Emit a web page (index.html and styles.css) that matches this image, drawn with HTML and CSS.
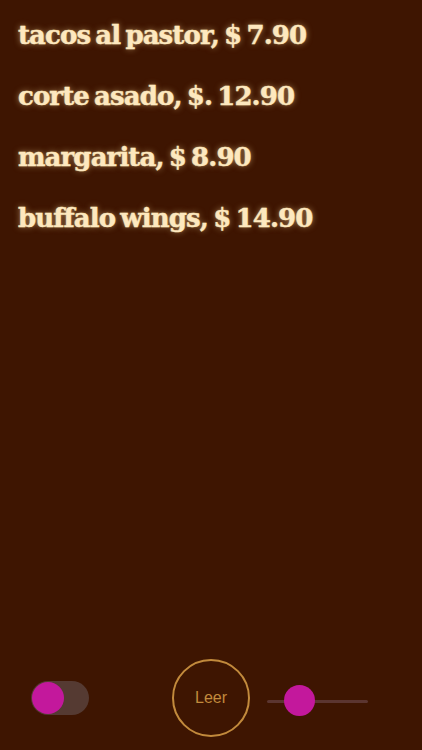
FILE: index.html
```html
<!DOCTYPE html>
<html>
<head>
<meta charset="utf-8">
<link rel="stylesheet" href="styles.css">
</head>
<body>
<div class="screen">
  <ul class="menu">
    <li>tacos al pastor, $ 7.90</li>
    <li>corte asado, $. 12.90</li>
    <li>margarita, $ 8.90</li>
    <li>buffalo wings, $ 14.90</li>
  </ul>
  <div class="controls">
    <div class="toggle"><span class="knob"></span></div>
    <button class="read">Leer</button>
    <div class="slider"><span class="track"></span><span class="thumb"></span></div>
  </div>
</div>
</body>
</html>
```
FILE: styles.css
```css
html, body { margin: 0; padding: 0; }
body { background: #3e1501; width: 422px; height: 750px; overflow: hidden; }
.screen { height: 750px; display: flex; flex-direction: column; justify-content: space-between; }
.menu { list-style: none; margin: 0; padding: 18px 0 0 18px; display: flex; flex-direction: column; gap: 27px; }
.menu li {
  font-family: "DejaVu Serif", serif; font-weight: bold; font-size: 26px; line-height: 34px;
  color: #fde8bf; letter-spacing: -0.9px; word-spacing: -3px;
  text-shadow: 0 0 6px rgba(255, 220, 160, 0.55), 0 0 2px rgba(255, 220, 160, 0.4);
  -webkit-text-stroke: 0.4px #fde8bf;
}
.controls { height: 100px; display: flex; align-items: center; padding: 0 0 4px 31px; box-sizing: border-box; }
.toggle { width: 58px; height: 34px; border-radius: 17px; background: #553a32; position: relative; }
.toggle .knob { position: absolute; left: 1px; top: 1px; width: 32px; height: 32px; border-radius: 50%; background: #c3189c; }
.read {
  margin-left: 83px; width: 78px; height: 78px; border-radius: 50%; border: 2px solid #c28a3c;
  background: transparent; color: #c28a3c; font-family: "Liberation Sans", Arial, sans-serif; font-size: 16px; padding: 0;
}
.slider { margin-left: 17px; width: 101px; height: 32px; position: relative; top: 3px; }
.slider .track { position: absolute; left: 0; right: 0; top: 15px; height: 3px; border-radius: 2px; background: #5b3530; }
.slider .thumb { position: absolute; left: 17px; top: 0; width: 31px; height: 31px; border-radius: 50%; background: #c3189c; }
```
